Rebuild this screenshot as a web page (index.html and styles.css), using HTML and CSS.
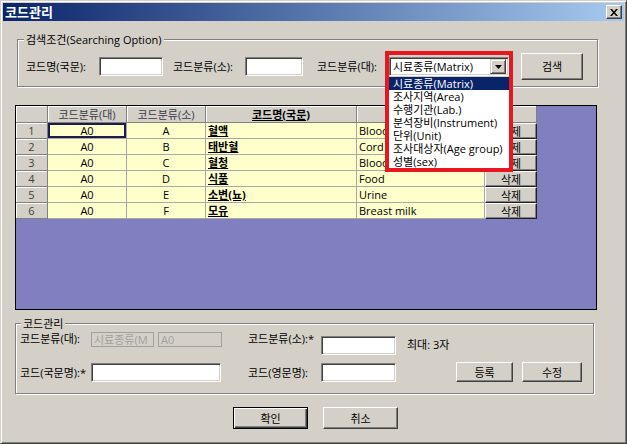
FILE: index.html
```html
<!DOCTYPE html>
<html lang="ko">
<head>
<meta charset="utf-8">
<title>코드관리</title>
<link rel="stylesheet" href="styles.css">
</head>
<body>
<div class="window">
  <div class="titlebar">
    <span class="title">코드관리</span>
    <span class="close"><svg width="8" height="7" viewBox="0 0 8 7"><path d="M0 0h2l2 2.4L6 0h2L5 3.5 8 7H6L4 4.6 2 7H0l3-3.5z" fill="#000"/></svg></span>
  </div>

  <div class="group search">
    <div class="legend">검색조건(Searching Option)</div>
    <div class="row">
      <span class="lbl s1">코드명(국문):</span>
      <span class="field f1"></span>
      <span class="lbl s2">코드분류(소):</span>
      <span class="field f2"></span>
      <span class="lbl s3">코드분류(대):</span>
      <div class="combo">
        <span class="combo-text">시료종류(Matrix)</span>
        <span class="combo-btn"><svg width="7" height="4" viewBox="0 0 7 4"><path d="M0 0h7L3.5 4z" fill="#000"/></svg></span>
        <ul class="dropdown">
          <li class="on">시료종류(Matrix)</li>
          <li>조사지역(Area)</li>
          <li>수행기관(Lab.)</li>
          <li>분석장비(Instrument)</li>
          <li>단위(Unit)</li>
          <li>조사대상자(Age group)</li>
          <li>성별(sex)</li>
        </ul>
        <div class="mark"></div>
      </div>
      <button class="btn search-btn">검색</button>
    </div>
  </div>

  <div class="grid">
    <table class="sheet">
      <colgroup>
        <col class="w-rh"><col class="w-c1"><col class="w-c2"><col class="w-c3"><col class="w-c4"><col class="w-c5">
      </colgroup>
      <thead>
        <tr class="hrow">
          <th></th><th>코드분류(대)</th><th>코드분류(소)</th><th class="strong">코드명(국문)</th><th class="strong">코드명(영문)</th><th></th>
        </tr>
      </thead>
      <tbody>
        <tr><th class="rh">1</th><td class="c sel">A0</td><td class="c">A</td><td class="name">혈액</td><td class="en">Blood</td><td class="del"><button class="btn del-btn">삭제</button></td></tr>
        <tr><th class="rh">2</th><td class="c">A0</td><td class="c">B</td><td class="name">태반혈</td><td class="en">Cord blood</td><td class="del"><button class="btn del-btn">삭제</button></td></tr>
        <tr><th class="rh">3</th><td class="c">A0</td><td class="c">C</td><td class="name">혈청</td><td class="en">Blood serum</td><td class="del"><button class="btn del-btn">삭제</button></td></tr>
        <tr><th class="rh">4</th><td class="c">A0</td><td class="c">D</td><td class="name">식품</td><td class="en">Food</td><td class="del"><button class="btn del-btn">삭제</button></td></tr>
        <tr><th class="rh">5</th><td class="c">A0</td><td class="c">E</td><td class="name">소변(뇨)</td><td class="en">Urine</td><td class="del"><button class="btn del-btn">삭제</button></td></tr>
        <tr><th class="rh">6</th><td class="c">A0</td><td class="c">F</td><td class="name">모유</td><td class="en">Breast milk</td><td class="del"><button class="btn del-btn">삭제</button></td></tr>
      </tbody>
    </table>
  </div>

  <div class="group manage">
    <div class="legend">코드관리</div>
    <div class="row1">
      <span class="lbl m1">코드분류(대):</span>
      <span class="dis d1">시료종류(M</span>
      <span class="dis d2">A0</span>
      <span class="lbl m2">코드분류(소):*</span>
      <span class="field f3"></span>
      <span class="lbl hint">최대: 3자</span>
    </div>
    <div class="row2">
      <span class="lbl m1">코드(국문명):*</span>
      <span class="field f4"></span>
      <span class="lbl m2">코드(영문명):</span>
      <span class="field f3b"></span>
      <button class="btn reg-btn">등록</button>
      <button class="btn mod-btn">수정</button>
    </div>
  </div>

  <div class="footer">
    <button class="btn foot-btn default">확인</button>
    <button class="btn foot-btn">취소</button>
  </div>
</div>
</body>
</html>
```

FILE: styles.css
```css
* { box-sizing: border-box; }

body {
  margin: 0;
  background: #d4d0c8;
  font-family: "Open Sans", "Noto Sans CJK KR", sans-serif;
  font-size: 11px;
  line-height: 13px;
  color: #000;
}

.window {
  width: 627px;
  height: 444px;
  background: #d4d0c8;
  border: 1px solid;
  border-color: #d4d0c8 #404040 #404040 #d4d0c8;
  box-shadow: inset 1px 1px 0 #fff, inset -1px -1px 0 #808080;
  padding: 2px;
  overflow: hidden;
}

/* title bar */
.titlebar {
  height: 18px;
  display: flex;
  align-items: center;
  justify-content: space-between;
  padding: 0 2px 0 2px;
  background: linear-gradient(to right, #0a246a, #a6caf0);
}
.title {
  color: #fff;
  font-weight: bold;
  font-size: 13px;
  line-height: 16px;
}
.close {
  width: 16px;
  height: 14px;
  display: flex;
  align-items: center;
  justify-content: center;
  background: #d4d0c8;
  border: 1px solid;
  border-color: #fff #404040 #404040 #fff;
  box-shadow: inset -1px -1px 0 #808080;
}

/* group boxes */
.group {
  border: 1px solid #808080;
  box-shadow: inset 1px 1px 0 #fff, 1px 1px 0 #fff;
}
.legend {
  width: fit-content;
  height: 13px;
  margin-top: -7px;
  padding: 0 2px;
  background: #d4d0c8;
  white-space: nowrap;
}

.search {
  width: 581px;
  margin: 18px 0 0 14px;
  padding: 0 0 6px 8px;
}
.search .legend { margin-left: -2px; }
.search .row {
  display: flex;
  align-items: center;
  height: 27px;
  margin-top: 7px;
}

.lbl { flex: none; white-space: nowrap; }
.s1 { width: 73px; }
.s2 { width: 72px; margin-left: 10px; }
.s3 { width: 72px; margin-left: 14px; }

.field {
  flex: none;
  height: 19px;
  background: #fff;
  border: 1px solid;
  border-color: #808080 #fff #fff #808080;
  box-shadow: inset 1px 1px 0 #404040, inset -1px -1px 0 #d4d0c8;
}
.f1 { width: 64px; }
.f2 { width: 58px; }

/* combo */
.combo {
  position: relative;
  z-index: 5;
  flex: none;
  width: 120px;
  height: 19px;
  display: flex;
  align-items: center;
  background: #fff;
  border: 1px solid;
  border-color: #808080 #fff #fff #808080;
  box-shadow: inset 1px 1px 0 #404040, inset -1px -1px 0 #d4d0c8;
  padding: 1px 2px 1px 3px;
}
.combo-text { flex: 1; white-space: nowrap; overflow: hidden; }
.combo-btn {
  flex: none;
  width: 16px;
  height: 15px;
  display: flex;
  align-items: center;
  justify-content: center;
  background: #d4d0c8;
  border: 1px solid;
  border-color: #d4d0c8 #404040 #404040 #d4d0c8;
  box-shadow: inset 1px 1px 0 #fff, inset -1px -1px 0 #808080;
}
.dropdown {
  position: absolute;
  left: -1px;
  top: 19px;
  width: 120px;
  margin: 0;
  padding: 0;
  list-style: none;
  background: #fff;
}
.dropdown li {
  height: 13px;
  padding-left: 4px;
  white-space: nowrap;
}
.dropdown li.on {
  background: #0a246a;
  color: #fff;
}
.mark {
  position: absolute;
  left: -5px;
  top: -7px;
  width: 128px;
  height: 121px;
  border: 4px solid #e8161e;
  pointer-events: none;
}

/* buttons */
.btn {
  flex: none;
  padding: 0;
  background: #d4d0c8;
  color: #000;
  font-family: inherit;
  font-size: 11px;
  line-height: 13px;
  border: 1px solid;
  border-color: #fff #404040 #404040 #fff;
  box-shadow: inset -1px -1px 0 #808080;
}
.search-btn { width: 62px; height: 27px; margin-left: 12px; }

/* grid */
.grid {
  width: 582px;
  height: 205px;
  margin: 18px 0 0 12px;
  background: #8080c0;
  border: 1px solid #000;
  overflow: hidden;
}
.sheet {
  width: 521px;
  table-layout: fixed;
  border-collapse: separate;
  border-spacing: 0;
}
.w-rh { width: 32px; }
.w-c1 { width: 79px; }
.w-c2 { width: 79px; }
.w-c3 { width: 151px; }
.w-c4 { width: 128px; }
.w-c5 { width: 52px; }

.sheet th,
.sheet td {
  padding: 0;
  font-weight: normal;
  white-space: nowrap;
  overflow: hidden;
}
.sheet th {
  background: #d4d0c8;
  border-right: 1px solid #808080;
  border-bottom: 1px solid #808080;
  box-shadow: inset 1px 1px 0 #fff;
  color: #3a3a4a;
  text-align: center;
}
.sheet th.strong {
  color: #000;
  font-weight: bold;
  text-decoration: underline;
}
.hrow { height: 17px; }
.sheet tbody tr { height: 16px; }
.sheet td {
  background: #ffffcc;
  border-right: 1px solid #a8a8a8;
  border-bottom: 1px solid #a8a8a8;
  padding-left: 2px;
}
.sheet th.rh { color: #404040; }
.sheet td.c { text-align: center; padding-left: 0; }
.sheet td.sel { box-shadow: inset 0 0 0 2px #1c1c4c; }
.sheet td.name { font-weight: bold; text-decoration: underline; }
.sheet td.del {
  padding: 0;
  border: none;
  background: #8080c0;
}
.del-btn {
  display: block;
  width: 52px;
  height: 16px;
  border-color: #fff #202020 #202020 #fff;
}

/* manage group */
.manage {
  width: 579px;
  margin: 13px 0 0 12px;
  padding: 0 0 11px 4px;
}
.manage .legend { margin-left: 1px; }
.row1 {
  display: flex;
  align-items: flex-start;
  height: 23px;
  margin-top: 2px;
}
.row2 {
  display: flex;
  align-items: center;
  height: 20px;
  margin-top: 7px;
}
.m1 { width: 71px; }
.m2 { width: 73px; margin-left: 26px; }
.row2 .m2 { margin-left: 27px; }
.dis {
  flex: none;
  height: 15px;
  border: 1px solid #a0a0a0;
  background: #d4d0c8;
  color: #a0a0a0;
  padding-left: 2px;
  white-space: nowrap;
}
.d1 { width: 63px; }
.d2 { width: 64px; margin-left: 4px; }
.f3 { width: 75px; margin-top: 4px; }
.f3b { width: 75px; }
.f4 { width: 130px; }
.hint { margin-left: 11px; margin-top: 6px; }
.reg-btn { width: 57px; height: 20px; margin-left: 60px; }
.mod-btn { width: 60px; height: 20px; margin-left: 9px; }

/* footer */
.footer {
  display: flex;
  gap: 15px;
  margin-top: 13px;
  padding-left: 230px;
}
.foot-btn { width: 75px; height: 22px; }
.foot-btn.default {
  border: 1px solid #000;
  box-shadow: inset 1px 1px 0 #fff, inset -1px -1px 0 #404040, inset -2px -2px 0 #808080;
}
```
